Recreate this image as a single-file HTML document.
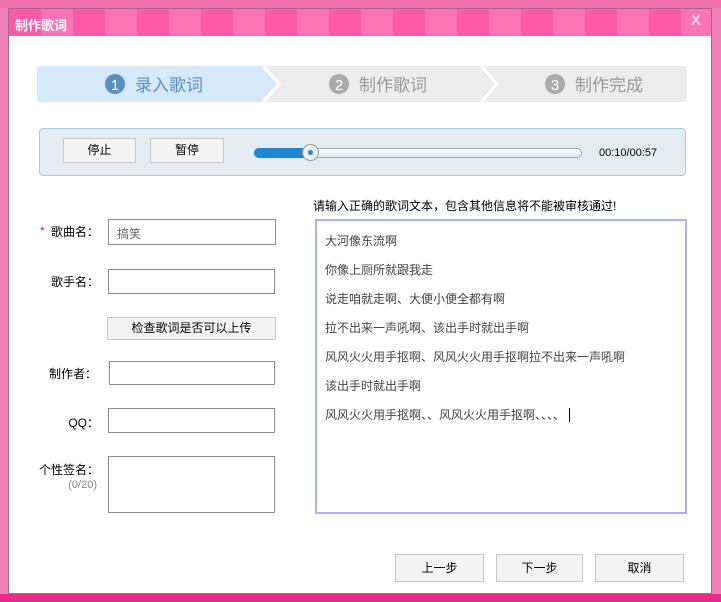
<!DOCTYPE html><html><head><meta charset="utf-8"><style>
*{margin:0;padding:0;box-sizing:border-box}
body{width:721px;height:602px;overflow:hidden;background:#f080b8;font-family:"Liberation Sans","Noto Sans CJK SC",sans-serif;font-size:12px;position:relative;color:#000}
.a{position:absolute}
.dlg{left:8px;top:8px;width:704px;height:586px;background:#fff;border:1px solid #b06090}
.tb{left:0;top:0;width:702px;height:27px;background:repeating-linear-gradient(90deg,#ff5aa8 0 32px,#ff74b6 32px 64px)}
.btn{position:absolute;background:#f4f4f4;border:1px solid #c8c8c8;text-align:center;font-size:12px}
.inp{position:absolute;border:1px solid #888;background:#fff}
.lbl{position:absolute;text-align:right;width:92px;font-size:12px}
</style></head><body>
<div class="a" style="left:0;top:0;width:721px;height:8px;background:#f070b0"></div>
<div class="a" style="left:0;top:594px;width:721px;height:8px;background:#e82a88"></div>
<div class="a dlg">
 <div class="a tb"></div>
 <div class="a" style="left:6px;top:6px;color:#fff;font-weight:bold;font-size:13px">制作歌词</div>
 <div class="a" style="left:682px;top:3px;color:#fff;font-size:15px;font-family:'Liberation Sans'">X</div>
 <svg class="a" style="left:28px;top:57px" width="650" height="36">
  <rect x="0" y="0" width="650" height="36" rx="3" fill="#ececec"/>
  <path d="M3 0H226L242 18L226 36H3Q0 36 0 33V3Q0 0 3 0Z" fill="#d5e9fb"/>
  <path d="M226 0L242 18L226 36" fill="none" stroke="#fff" stroke-width="3"/>
  <path d="M444 0L460 18L444 36" fill="none" stroke="#fff" stroke-width="3"/>
  <circle cx="78" cy="18" r="10" fill="#5b8ebe"/>
  <circle cx="302" cy="18" r="10" fill="#aaa"/>
  <circle cx="518" cy="18" r="10" fill="#aaa"/>
  <text x="78" y="24" font-size="15" fill="#fff" text-anchor="middle" font-family="Liberation Sans">1</text>
  <text x="302" y="24" font-size="15" fill="#fff" text-anchor="middle" font-family="Liberation Sans">2</text>
  <text x="518" y="24" font-size="15" fill="#fff" text-anchor="middle" font-family="Liberation Sans">3</text>
  <text x="98" y="25" font-size="17" fill="#5b8ebe" font-family="Noto Sans CJK SC">录入歌词</text>
  <text x="322" y="25" font-size="17" fill="#999" font-family="Noto Sans CJK SC">制作歌词</text>
  <text x="538" y="25" font-size="17" fill="#999" font-family="Noto Sans CJK SC">制作完成</text>
 </svg>
 <div class="a" style="left:30px;top:119px;width:647px;height:48px;background:#e4ecf2;border:1px solid #a8c8dc;border-radius:4px"></div>
 <div class="btn" style="left:54px;top:129px;width:73px;height:25px;line-height:23px">停止</div>
 <div class="btn" style="left:141px;top:129px;width:74px;height:25px;line-height:23px">暂停</div>
 <div class="a" style="left:245px;top:139px;width:328px;height:10px;border:1px solid #9ab;border-radius:5px;background:linear-gradient(#fff,#dde8f0)"></div>
 <div class="a" style="left:245px;top:139px;width:56px;height:10px;border-radius:5px;background:#1f86d2"></div>
 <div class="a" style="left:293px;top:135px;width:17px;height:17px;border-radius:50%;background:radial-gradient(#1f86d2 0 2px,#eee 3px);border:1px solid #999"></div>
 <div class="a" style="left:590px;top:138px;font-size:11px">00:10/00:57</div>
 <div class="a" style="left:31px;top:215px;color:#e02060">*</div>
 <div class="lbl" style="left:-2px;top:214px">歌曲名：</div>
 <div class="inp" style="left:99px;top:210px;width:168px;height:26px"><span style="position:absolute;left:8px;top:5px;color:#666">搞笑</span></div>
 <div class="lbl" style="left:-2px;top:264px">歌手名：</div>
 <div class="inp" style="left:99px;top:260px;width:167px;height:25px"></div>
 <div class="btn" style="left:98px;top:308px;width:169px;height:23px;line-height:21px">检查歌词是否可以上传</div>
 <div class="lbl" style="left:-4px;top:356px">制作者：</div>
 <div class="inp" style="left:100px;top:352px;width:166px;height:24px"></div>
 <div class="lbl" style="left:-2px;top:405px">QQ：</div>
 <div class="inp" style="left:99px;top:399px;width:167px;height:25px"></div>
 <div class="lbl" style="left:-2px;top:452px">个性签名：</div>
 <div class="lbl" style="left:-4px;top:470px;color:#888;font-size:11px">(0/20)</div>
 <div class="inp" style="left:99px;top:447px;width:167px;height:57px"></div>
 <div class="a" style="left:304px;top:188px;font-size:12px">请输入正确的歌词文本，包含其他信息将不能被审核通过!</div>
 <div class="a" style="left:306px;top:210px;width:372px;height:295px;border:2px solid #b0b0f8;color:#444;font-size:12px;padding:6px 0 0 8px;line-height:29px">
 大河像东流啊<br>你像上厕所就跟我走<br>说走咱就走啊、大便小便全都有啊<br>拉不出来一声吼啊、该出手时就出手啊<br>风风火火用手抠啊、风风火火用手抠啊拉不出来一声吼啊<br>该出手时就出手啊<br>风风火火用手抠啊、、风风火火用手抠啊、、、、<span style="border-left:1px solid #000;margin-left:4px"></span>
 </div>
 <div class="btn" style="left:386px;top:545px;width:89px;height:28px;line-height:26px">上一步</div>
 <div class="btn" style="left:487px;top:545px;width:87px;height:28px;line-height:26px">下一步</div>
 <div class="btn" style="left:586px;top:545px;width:89px;height:28px;line-height:26px">取消</div>
</div>
</body></html>
